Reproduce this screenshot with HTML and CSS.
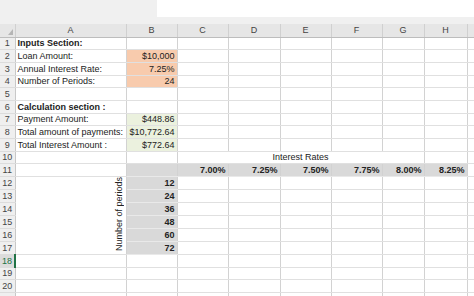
FILE: index.html
```html
<!doctype html>
<html lang="en">
<head>
    <meta charset="utf-8">
    <title>Loan Calculator</title>
    <link rel="stylesheet" href="styles.css">
</head>
<body>
    <div class="topbar">
        <div class="namebox"></div>
        <div class="formula"></div>
    </div>
    <table class="sheet">
        <colgroup>
            <col class="w-rh"><col class="w-a"><col class="w-b"><col class="w-c"><col class="w-d">
            <col class="w-e"><col class="w-f"><col class="w-g"><col class="w-h"><col class="w-x">
        </colgroup>
        <tr class="colrow">
            <th class="corner"><svg width="5" height="6" viewBox="0 0 5 6"><polygon points="5,0 5,6 0,6" fill="#b5b5b5"/></svg></th>
            <th>A</th><th>B</th><th>C</th><th>D</th><th>E</th><th>F</th><th>G</th><th>H</th><th></th>
        </tr>
        <tr><th>1</th><td class="b">Inputs Section:</td><td></td><td></td><td></td><td></td><td></td><td></td><td></td><td></td></tr>
        <tr><th>2</th><td>Loan Amount:</td><td class="num input">$10,000</td><td></td><td></td><td></td><td></td><td></td><td></td><td></td></tr>
        <tr><th>3</th><td>Annual Interest Rate:</td><td class="num input">7.25%</td><td></td><td></td><td></td><td></td><td></td><td></td><td></td></tr>
        <tr><th>4</th><td>Number of Periods:</td><td class="num input">24</td><td></td><td></td><td></td><td></td><td></td><td></td><td></td></tr>
        <tr><th>5</th><td></td><td></td><td></td><td></td><td></td><td></td><td></td><td></td><td></td></tr>
        <tr><th>6</th><td class="b">Calculation section :</td><td></td><td></td><td></td><td></td><td></td><td></td><td></td><td></td></tr>
        <tr><th>7</th><td>Payment Amount:</td><td class="num calc">$448.86</td><td></td><td></td><td></td><td></td><td></td><td></td><td></td></tr>
        <tr><th>8</th><td>Total amount of payments:</td><td class="num calc">$10,772.64</td><td></td><td></td><td></td><td></td><td></td><td></td><td></td></tr>
        <tr><th>9</th><td>Total Interest Amount :</td><td class="num calc">$772.64</td><td></td><td></td><td></td><td></td><td></td><td></td><td></td></tr>
        <tr><th>10</th><td></td><td></td><td colspan="5" class="center">Interest Rates</td><td></td><td></td></tr>
        <tr><th>11</th><td></td><td class="hd"></td><td class="hd num b">7.00%</td><td class="hd num b">7.25%</td><td class="hd num b">7.50%</td><td class="hd num b">7.75%</td><td class="hd num b">8.00%</td><td class="hd num b">8.25%</td><td></td></tr>
        <tr><th>12</th><td rowspan="6" class="vert"><span>Number of periods</span></td><td class="hd num b">12</td><td></td><td></td><td></td><td></td><td></td><td></td><td></td></tr>
        <tr><th>13</th><td class="hd num b">24</td><td></td><td></td><td></td><td></td><td></td><td></td><td></td></tr>
        <tr><th>14</th><td class="hd num b">36</td><td></td><td></td><td></td><td></td><td></td><td></td><td></td></tr>
        <tr><th>15</th><td class="hd num b">48</td><td></td><td></td><td></td><td></td><td></td><td></td><td></td></tr>
        <tr><th>16</th><td class="hd num b">60</td><td></td><td></td><td></td><td></td><td></td><td></td><td></td></tr>
        <tr><th>17</th><td class="hd num b">72</td><td></td><td></td><td></td><td></td><td></td><td></td><td></td></tr>
        <tr><th class="sel">18</th><td></td><td></td><td></td><td></td><td></td><td></td><td></td><td></td><td></td></tr>
        <tr><th>19</th><td></td><td></td><td></td><td></td><td></td><td></td><td></td><td></td><td></td></tr>
        <tr><th>20</th><td></td><td></td><td></td><td></td><td></td><td></td><td></td><td></td><td></td></tr>
        <tr><th>21</th><td></td><td></td><td></td><td></td><td></td><td></td><td></td><td></td><td></td></tr>
    </table>
</body>
</html>
```

FILE: styles.css
```css
body {
    margin: 0;
    height: 296px;
    overflow: hidden;
    background: #fff;
    font-family: "Liberation Sans", Arial, sans-serif;
    font-size: 9px;
    color: #222;
}
.topbar {
    display: flex;
    height: 24px;
    background: #f0f0f0;
}
.namebox {
    width: 157px;
}
.formula {
    flex: 1;
    height: 17px;
    background: #fff;
}
.sheet {
    width: 474px;
    table-layout: fixed;
    border-collapse: collapse;
}
.w-rh { width: 15px; }
.w-a { width: 111px; }
.w-b { width: 51px; }
.w-c { width: 51px; }
.w-d { width: 52px; }
.w-e { width: 51px; }
.w-f { width: 51px; }
.w-g { width: 42px; }
.w-h { width: 43px; }
.w-x { width: 7px; }
.sheet tr {
    height: 12.68px;
}
.sheet td {
    padding: 0 2px;
    border-right: 1px solid #d2d2d2;
    border-bottom: 1px solid #e0e0e0;
    white-space: nowrap;
    overflow: hidden;
    line-height: 10px;
}
.sheet th {
    padding: 0;
    font-weight: normal;
    color: #444;
    background: #efefef;
    border-right: 1px solid #c8c8c8;
    border-bottom: 1px solid #dcdcdc;
    line-height: 10px;
}
.sheet .colrow {
    height: 13px;
}
.colrow th {
    background: #e6e6e6;
    border-right: 1px solid #d0d0d0;
    border-bottom: 1px solid #bdbdbd;
}
.colrow .corner {
    text-align: right;
    vertical-align: bottom;
    padding: 0 2px 2px 0;
    line-height: 0;
}
.sheet th.sel {
    color: #217346;
    background: #dcdcdc;
    border-right: 2px solid #217346;
}
.b {
    font-weight: bold;
}
.num {
    text-align: right;
}
.center {
    text-align: center;
}
.input {
    background: #f8cbad;
}
.calc {
    background: #ebf1de;
}
.sheet .hd {
    background: #d9d9d9;
    border-bottom-color: #e9e9e9;
}
.sheet .vert {
    vertical-align: bottom;
    text-align: right;
    padding: 0 2px 1px 0;
}
.vert span {
    display: inline-block;
    writing-mode: vertical-rl;
    transform: rotate(180deg);
    line-height: 10px;
}
```
